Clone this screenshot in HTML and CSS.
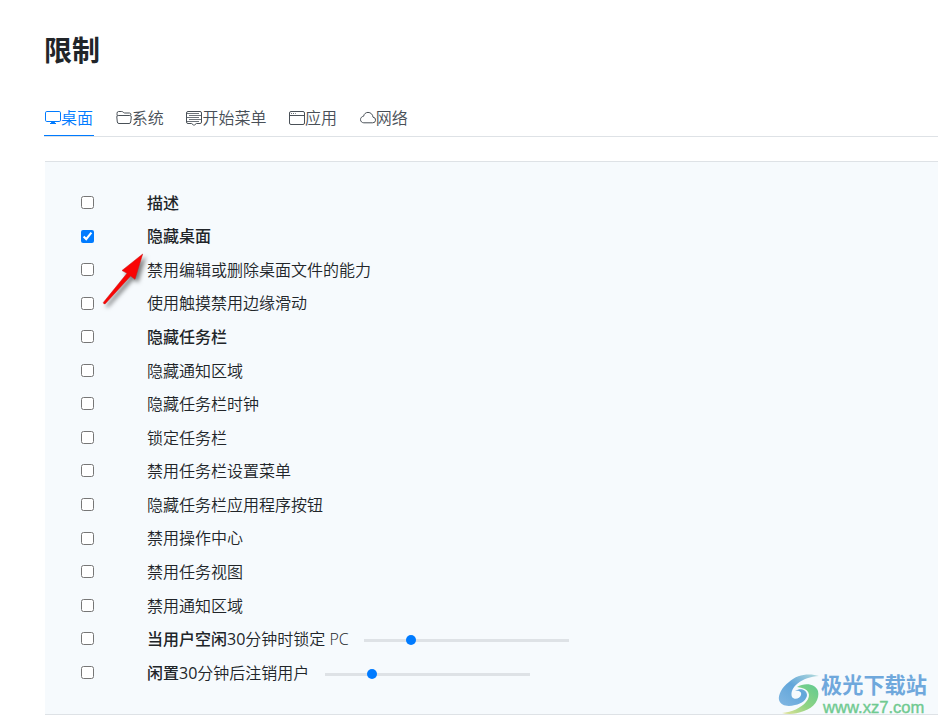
FILE: index.html
```
<!DOCTYPE html>
<html lang="zh-CN">
<head>
  <meta charset="UTF-8" />
  <title>限制</title>
  <link rel="stylesheet" href="styles.css">
</head>
<body>
  <div class="page">
    <h1>限制</h1>

    <!-- tabs -->
    <nav class="tabs">
      <a class="tab active"><svg viewBox="0 0 16 16"><rect x=".5" y="1.5" width="15" height="10" rx="1.3" /><path d="M6.6 11.5v2.2M9.4 11.5v2.2M5 13.5h6M7 12.5h2" /></svg>桌面</a>
      <a class="tab"><svg viewBox="0 0 16 16"><path d="M1.1 5.5 1 3.5Q1 1.5 2.5 1.5h3.2q.8 0 1.3.5l.7.6q.5.4 1.2.4h4.6q1.5 0 1.5 2M2.2 5.5h11.6q1.6 0 1.5 1.5l-.6 5q-.2 1.5-1.7 1.5H3q-1.5 0-1.7-1.5L.8 7Q.6 5.5 2.2 5.5z" /></svg>系统</a>
      <a class="tab"><svg viewBox="0 0 16 16"><path d="M2 1.5h12Q15.5 1.5 15.5 3v9q0 1.5-1.5 1.5h-3.6L8.5 15h-1l-1.9-1.5H2Q.5 13.5.5 12V3Q.5 1.5 2 1.5z" /><path class="lines" d="M1 3.5h12M3 5.5h12M1 7.5h12M3 9.5h12M1 11.5h12" /></svg>开始菜单</a>
      <a class="tab"><svg viewBox="0 0 16 16"><rect x=".5" y="1.5" width="15" height="13" rx="1.5" /><path d="M.5 5.5h15M2.2 3.5h.8M4.2 3.5h.8M6.2 3.5h.6" /></svg>应用</a>
      <a class="tab"><svg viewBox="0 0 16 16"><path d="M3.8 12.8h8.7a2.8 2.8 0 0 0 .5-5.6C12.8 4.4 10.7 2.4 8 2.4 5.8 2.4 4 3.9 3.6 6.2 1.8 6.5.5 7.8.5 9.6c0 1.8 1.5 3.2 3.3 3.2z" /></svg>网络</a>
    </nav>

    <!-- restrictions list -->
    <div class="panel">
      <div class="row"><input type="checkbox" /><b>描述</b></div>
      <div class="row"><input type="checkbox" checked /><b>隐藏桌面</b></div>
      <div class="row"><input type="checkbox" /><span>禁用编辑或删除桌面文件的能力</span></div>
      <div class="row"><input type="checkbox" /><span>使用触摸禁用边缘滑动</span></div>
      <div class="row"><input type="checkbox" /><b>隐藏任务栏</b></div>
      <div class="row"><input type="checkbox" /><span>隐藏通知区域</span></div>
      <div class="row"><input type="checkbox" /><span>隐藏任务栏时钟</span></div>
      <div class="row"><input type="checkbox" /><span>锁定任务栏</span></div>
      <div class="row"><input type="checkbox" /><span>禁用任务栏设置菜单</span></div>
      <div class="row"><input type="checkbox" /><span>隐藏任务栏应用程序按钮</span></div>
      <div class="row"><input type="checkbox" /><span>禁用操作中心</span></div>
      <div class="row"><input type="checkbox" /><span>禁用任务视图</span></div>
      <div class="row"><input type="checkbox" /><span>禁用通知区域</span></div>
      <div class="row"><input type="checkbox" /><span class="lock"><b>当用户空闲</b><span class="num">30</span>分钟时锁定 PC</span><input type="range" min="0" max="130" value="28" /></div>
      <div class="row"><input type="checkbox" /><span class="logoff"><b>闲置</b><span class="num">30</span>分钟后注销用户</span><input type="range" min="0" max="130" value="28" /></div>
    </div>
  </div>

  <!-- pointer arrow -->
  <svg class="arrow" viewBox="0 0 60 70">
    <path d="M13.3 52.5 37 23.3 32 20.5 52.7 4 45 29.3 40.6 26 15.3 53.7Q13.5 54.5 13.3 52.5z" />
  </svg>

  <div class="watermark">
    <svg viewBox="0 0 42 42">
      <defs>
        <linearGradient id="wave" x1="1" y1="0" x2="0" y2="1">
          <stop offset="0" stop-color="#b5dcdc" />
          <stop offset=".5" stop-color="#62a6da" />
          <stop offset="1" stop-color="#82b7e2" />
        </linearGradient>
        <linearGradient id="leaf" x1="1" y1="0" x2="0" y2="1">
          <stop offset="0" stop-color="#5fca91" />
          <stop offset=".55" stop-color="#91d483" />
          <stop offset="1" stop-color="#e6e399" />
        </linearGradient>
      </defs>
      <path fill="url(#wave)" d="M41 3C32 0 19 1 11 9 4 14 0 22 1 27c2 6 9 7 16 5 7-1 12-6 12-10 0-5-6-8-12-4 4-1 7 1 6 4-1 4-7 5-9 2C11 14 24 4 41 3z" />
      <path fill="url(#leaf)" d="M19 14c8-5 19-3 21 4 2 8-4 17-14 20-8 3-15 4-22 2 10-1 19-5 24-11 6-7 3-14-9-15z" />
    </svg>
    <div class="brand">
      <span class="brand-name">极光下载站</span>
      <span class="brand-url">www.xz7.com</span>
    </div>
  </div>
</body>
</html>
```
FILE: styles.css
```
* {
  box-sizing: border-box;
}

body {
  margin: 0;
  height: 724px;
  overflow: hidden;
  position: relative;
  background: #fff;
  color: #212529;
  font-family: "Open Sans", "Noto Sans CJK SC", sans-serif;
  font-size: 16px;
  line-height: 24px;
}

.page {
  padding: 31px 0 0 45px;
}

h1 {
  margin: 0 0 33px -1px;
  font-family: "Noto Sans CJK SC", sans-serif;
  font-size: 28px;
  line-height: 36px;
  font-weight: 700;
}

b {
  font-weight: 500;
}

.tabs {
  display: flex;
  gap: 20.7px;
  margin-left: -1px;
  border-bottom: 1px solid #dee2e6;
}

.tab {
  display: flex;
  padding: 6px 1px;
  height: 36px;
  color: #495057;
  font-weight: 350;
  white-space: nowrap;
}

.tab svg {
  width: 16px;
  height: 16px;
  margin-top: 4px;
  fill: none;
  stroke: currentColor;
  stroke-width: 1;
}

.tab .lines {
  opacity: 0.8;
}

.tab.active {
  color: #007bff;
  border-bottom: 1px solid #007bff;
}

.panel {
  margin-top: 24px;
  height: 554px;
  padding: 24px 36px;
  background: #f6fafd;
  border-top: 1px solid #dee2e6;
  border-bottom: 1px solid #dee2e6;
}

.row {
  display: flex;
  align-items: center;
  height: 33.57px;
  font-weight: 350;
  white-space: nowrap;
}

.row input[type="checkbox"] {
  width: 13px;
  height: 13px;
  margin: 0 53px 0.7px 0;
  accent-color: #007bff;
}

.lock {
  width: 201px;
}

.logoff {
  width: 162px;
}

.num {
  font-weight: 400;
}

input[type="range"] {
  appearance: none;
  width: 205px;
  height: 10px;
  margin: 3px 0 0 16px;
  background: transparent;
}

input[type="range"]::-webkit-slider-runnable-track {
  height: 3px;
  background: #dee2e6;
}

input[type="range"]::-webkit-slider-thumb {
  appearance: none;
  width: 10px;
  height: 10px;
  margin-top: -4px;
  border-radius: 50%;
  background: #007bff;
}

.arrow {
  position: absolute;
  left: 90px;
  top: 250px;
  width: 60px;
  height: 70px;
  overflow: visible;
  fill: #f90505;
  stroke: #c91818;
  stroke-width: 0.5;
  filter: drop-shadow(3px 3px 2px rgba(0, 0, 0, 0.5));
}

.watermark {
  position: absolute;
  left: 778px;
  top: 673px;
  display: flex;
}

.watermark svg {
  width: 42px;
  height: 42px;
}

.brand {
  display: flex;
  flex-direction: column;
  margin: -2px 0 0 1px;
}

.brand-name {
  font-family: "Noto Sans CJK SC", sans-serif;
  font-size: 21.2px;
  line-height: 26px;
  font-weight: 700;
  color: #6fa8dc;
}

.brand-url {
  margin: 1px 0 0 2px;
  font-family: "Liberation Sans", sans-serif;
  font-size: 16.6px;
  line-height: 20px;
  color: #70ca91;
  -webkit-text-stroke: 0.4px #70ca91;
}
```
